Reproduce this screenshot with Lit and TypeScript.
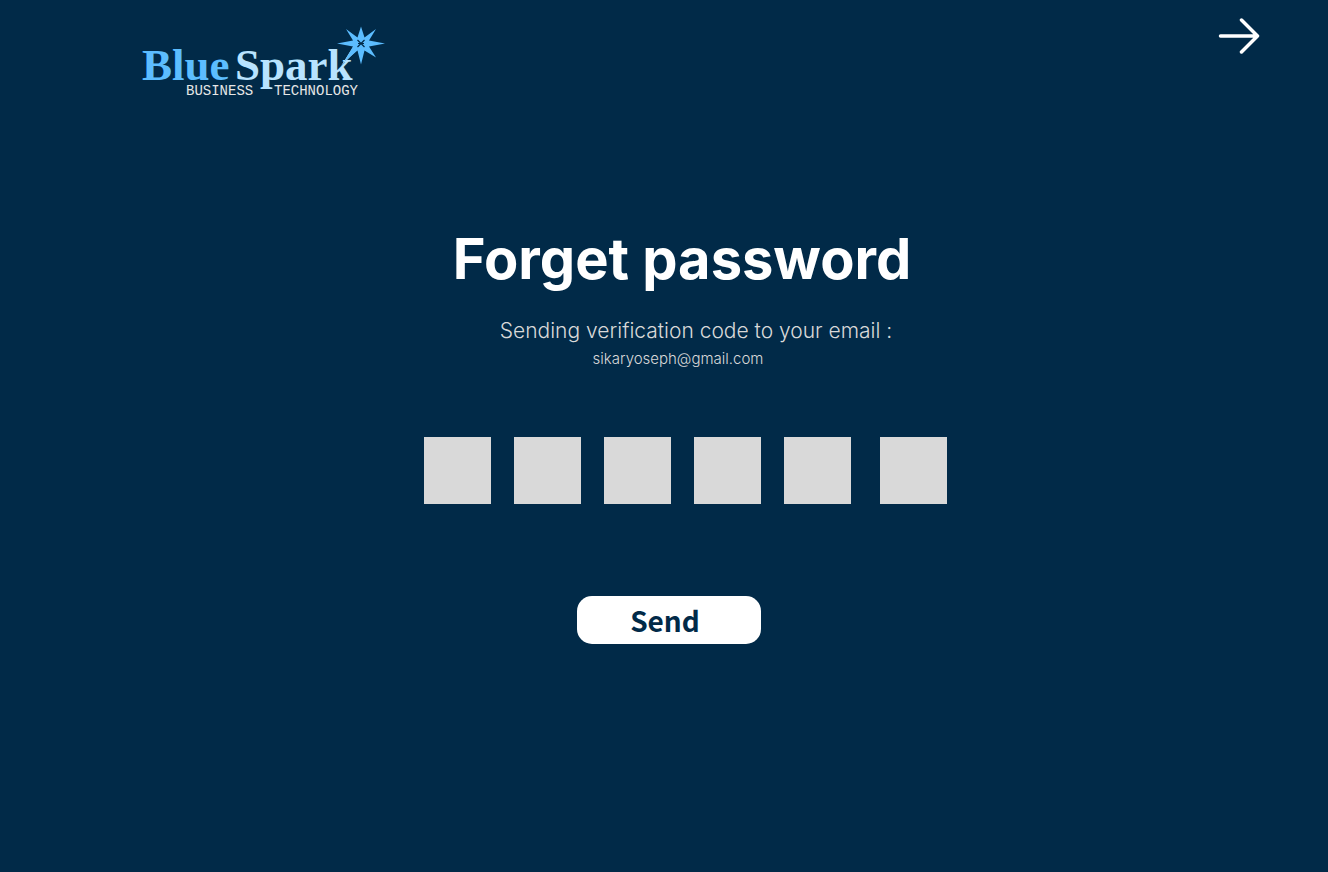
import { LitElement, html, css } from "lit";
import { customElement, state } from "lit/decorators.js";

@customElement("spark-logo")
export class SparkLogo extends LitElement {
  static styles = css`
    :host {
      display: block;
    }
    .logo {
      display: block;
      width: 244px;
      height: 72px;
    }
    .name {
      font: 700 45px "Liberation Serif", serif;
    }
    .tag {
      font: 400 14px "Liberation Mono", monospace;
      fill: #e6e6e6;
    }
    .light {
      fill: #5cbdff;
    }
    .pale {
      fill: #b8e3ff;
    }
    .core {
      fill: none;
      stroke: #012a48;
      stroke-width: 1.2;
    }
  `;

  render() {
    return html`
      <svg class="logo" viewBox="0 0 244 72" role="img" aria-label="Blue Spark Business Technology">
        <text class="name light" x="0" y="54">Blue</text>
        <text class="name pale" x="93" y="54">Spark</text>
        <path class="pale" d="M199 40 211 21 215 24Z" />
        <path
          class="light"
          d="M219 0.500 222.500 11.500 234 3 227 14.500 243 17.500 227 20.500 234 31.500 222.500 24.500 219 38.500 215.500 24.500 202 36 211 20.500 195 17.500 211 14.500 204 3 215.500 11.500Z"
        />
        <path class="core" d="M215.500 14 222.500 21M222.500 14 215.500 21M216 17.500H222" />
        <text class="tag" x="44" y="69">BUSINESS</text>
        <text class="tag" x="132" y="69">TECHNOLOGY</text>
      </svg>
    `;
  }
}

@customElement("app-root")
export class AppRoot extends LitElement {
  @state() private code: string[] = ["", "", "", "", "", ""];

  static styles = css`
    :host {
      display: block;
      min-height: 100vh;
      background: #012a48;
      font-family: Inter, sans-serif;
      color: #d9d9d9;
    }
    .top {
      display: flex;
      justify-content: space-between;
      align-items: flex-start;
      padding: 16px 68px 0 142px;
    }
    .brand {
      padding-top: 10px;
    }
    .next {
      display: block;
    }
    .next svg {
      display: block;
      width: 42px;
      height: 38px;
    }
    form {
      display: flex;
      flex-direction: column;
      align-items: center;
      padding-top: 124px;
    }
    h1 {
      margin: 0;
      padding-left: 36px;
      font-size: 56px;
      line-height: 74px;
      font-weight: 700;
      color: #fff;
    }
    p {
      margin: 0;
    }
    .note {
      padding: 21px 0 0 64px;
      font-size: 21px;
      line-height: 28px;
      font-weight: 300;
    }
    .mail {
      padding-left: 28px;
      font-size: 15px;
      line-height: 28px;
      font-weight: 300;
    }
    .code {
      display: flex;
      gap: 23px;
      margin: 0;
      padding: 64px 0 0 42px;
      border: 0;
    }
    .digit {
      box-sizing: border-box;
      width: 67px;
      height: 67px;
      padding: 0;
      border: 0;
      border-radius: 0;
      background: #d9d9d9;
      color: #012a48;
      font: 600 32px Inter, sans-serif;
      text-align: center;
    }
    .digit:last-child {
      margin-left: 6px;
    }
    .actions {
      padding: 92px 0 32px 10px;
    }
    .send {
      display: block;
      width: 184px;
      height: 48px;
      padding: 0 8px 0 0;
      border: 0;
      border-radius: 15px;
      background: #fff;
      color: #012a48;
      font: 700 28px "Noto Sans CJK JP", sans-serif;
      line-height: 48px;
      cursor: pointer;
    }
  `;

  private onInput(e: Event, i: number) {
    const box = e.target as HTMLInputElement;
    this.code = this.code.map((v, n) => (n === i ? box.value : v));
    if (box.value) (box.nextElementSibling as HTMLInputElement | null)?.focus();
  }

  render() {
    return html`
      <header class="top">
        <spark-logo class="brand"></spark-logo>
        <a class="next" href="#" aria-label="Next">
          <svg viewBox="0 0 42 38" fill="none" stroke="#fff" stroke-width="3.500" stroke-linecap="round" stroke-linejoin="round">
            <path d="M2.500 20H39.500M23.500 4 39.500 20 23.500 36" />
          </svg>
        </a>
      </header>
      <main>
        <form @submit=${(e: Event) => e.preventDefault()}>
          <h1>Forget password</h1>
          <p class="note">Sending verification code to your email :</p>
          <p class="mail">sikaryoseph@gmail.com</p>
          <fieldset class="code" aria-label="Verification code">
            ${this.code.map(
              (v, i) => html`<input
                class="digit"
                inputmode="numeric"
                maxlength="1"
                aria-label="Digit ${i + 1}"
                .value=${v}
                @input=${(e: Event) => this.onInput(e, i)}
              />`
            )}
          </fieldset>
          <div class="actions"><button class="send" type="submit">Send</button></div>
        </form>
      </main>
    `;
  }
}
